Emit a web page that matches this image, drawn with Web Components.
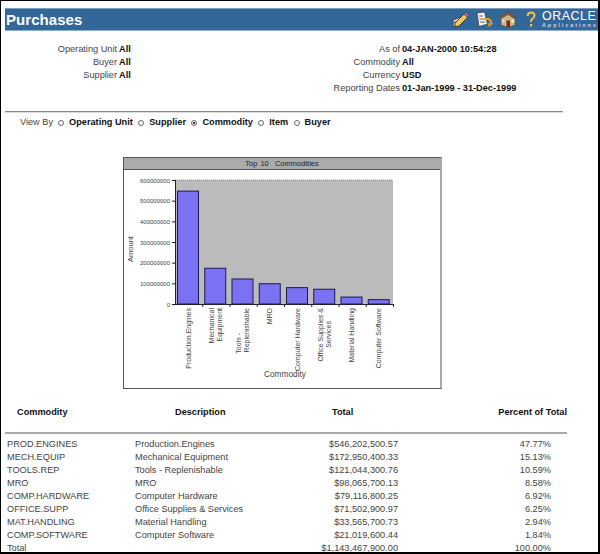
<!DOCTYPE html>
<html>
<head>
<meta charset="utf-8">
<title>Purchases</title>
<style>
  html, body { margin: 0; background: #fff; }
  body { font: 9.2px "Liberation Sans", Arial, sans-serif; color: #444; }
</style>
</head>
<body>
<report-page>
  <app-header heading="Purchases" slot="header"></app-header>
  <param-block>
    <param-col>
      <param-row label="Operating Unit">All</param-row>
      <param-row label="Buyer">All</param-row>
      <param-row label="Supplier">All</param-row>
    </param-col>
    <param-col>
      <param-row label="As of">04-JAN-2000 10:54:28</param-row>
      <param-row label="Commodity">All</param-row>
      <param-row label="Currency">USD</param-row>
      <param-row label="Reporting Dates">01-Jan-1999 - 31-Dec-1999</param-row>
    </param-col>
  </param-block>
  <view-by></view-by>
  <chart-panel heading="Top 10  Commodities"></chart-panel>
  <data-table></data-table>
</report-page>

<script>
function html(str) {
  const t = document.createElement("template");
  t.innerHTML = str;
  return t;
}

const pageTpl = html(`
  <style>
    :host { display: block; box-sizing: border-box; width: 600px; height: 554px; overflow: hidden;
      border: solid #000; border-width: 1px 2px 2px 1px; padding: 7px 0 0 4px; background: #fff; }
  </style>
  <slot name="header"></slot>
  <slot></slot>
`);
class ReportPage extends HTMLElement {
  constructor() {
    super();
    this.attachShadow({ mode: "open" }).appendChild(pageTpl.content.cloneNode(true));
  }
}
customElements.define("report-page", ReportPage);

const headerTpl = html(`
  <style>
    :host { display: flex; align-items: center; justify-content: space-between; height: 21px;
      background: #336699; border-top: 1px solid #7f9fc0; border-bottom: 1px solid #8fb0d0; }
    h1 { margin: 0 0 1px 1px; font: bold 15px "Liberation Sans", Arial, sans-serif; letter-spacing: .05px; color: #fff; }
    .tools { display: flex; align-items: center; }
    svg { display: block; }
    .logo { width: 56px; margin-left: 6px; color: #fff; }
    .logo b { display: block; font: 12.5px/12px "Liberation Sans", Arial, sans-serif; letter-spacing: .5px; white-space: nowrap; }
    .logo i { display: block; font: bold 5.5px/7px "Liberation Sans", Arial, sans-serif; letter-spacing: 1.9px; color: #c8d4e2; white-space: nowrap; }
  </style>
  <h1></h1>
  <div class="tools">
    <!-- pencil on pad -->
    <svg width="18" height="17" viewBox="0 0 18 17" style="margin-right:6px">
      <path d="M1 9 L9 6 L11 12 L4 16 L1 16 Z" fill="#d8d8d0" stroke="#333" stroke-width=".8"/>
      <path d="M1 12 L6 10 M2 15 L8 12" stroke="#555" stroke-width=".9"/>
      <path d="M3 12 L12 3 L15.500 6.500 L7 15 L3 16 Z" fill="#ecc75a" stroke="#2a2a2a" stroke-width=".8"/>
      <path d="M12 3 L14 1 L17 4 L15.500 6.500 Z" fill="#a86aa8" stroke="#333" stroke-width=".4"/>
    </svg>
    <!-- page with arrow -->
    <svg width="18" height="17" viewBox="0 0 18 17" style="margin-right:6px">
      <path d="M1 2 L8.500 1 L11.500 13 L3 15.500 Z" fill="#f4f4f4" stroke="#333" stroke-width=".7"/>
      <path d="M3 5 h4 M3.500 8 h4 M4 11 h5" stroke="#7a5a5a"/>
      <path d="M8 8 L12 8 Q15.500 9 15 13" fill="none" stroke="#e0a020" stroke-width="2.200"/>
      <path d="M11.500 12 L17.500 12 L13 16.500 Z" fill="#d89018"/>
    </svg>
    <!-- house -->
    <svg width="16" height="17" viewBox="0 0 16 17" style="margin-right:10px">
      <path d="M1 7 L8 3 L15 7 L15 14 L8 16.500 L1 14 Z" fill="#c8b888" stroke="#4a4a38" stroke-width=".6"/>
      <path d="M8 .5 L15.500 6.500 L14 7.500 L8 3.500 L2 7 L.5 6 Z" fill="#8a5c3c" stroke="#4a3020" stroke-width=".4"/>
      <rect x="6.500" y="9.500" width="3.500" height="6.500" fill="#8c2018"/>
      <rect x="11.500" y="8.500" width="2.500" height="3" fill="#f2ecc8"/>
      <rect x="2.500" y="8.500" width="2" height="3" fill="#e8e0b8"/>
    </svg>
    <!-- help -->
    <svg width="10" height="17" viewBox="0 0 10 17">
      <path d="M1.500 5 Q2 1.500 5 1.500 Q8.500 1.500 8.500 4.500 Q8.500 6.500 6 8 Q5 9 5 11" fill="none" stroke="#f0c040" stroke-width="2"/>
      <rect x="4" y="13" width="2.200" height="2.500" fill="#f0c040"/>
    </svg>
    <div class="logo"><b>ORACLE</b><i>Applications</i></div>
  </div>
`);
class AppHeader extends HTMLElement {
  constructor() {
    super();
    this.attachShadow({ mode: "open" }).appendChild(headerTpl.content.cloneNode(true));
    this.shadowRoot.querySelector("h1").textContent = this.getAttribute("heading");
  }
}
customElements.define("app-header", AppHeader);

const blockTpl = html(`
  <style>
    :host { display: grid; grid-template-columns: 283px 1fr; height: 69px; margin-top: 12px; box-sizing: border-box;
      width: 558px; border-bottom: 1px solid #888; box-shadow: 0 1px 0 #ddd; }
  </style>
  <slot></slot>
`);
class ParamBlock extends HTMLElement {
  constructor() {
    super();
    this.attachShadow({ mode: "open" }).appendChild(blockTpl.content.cloneNode(true));
  }
}
customElements.define("param-block", ParamBlock);

const colTpl = html(`
  <style>:host { display: block; }</style>
  <slot></slot>
`);
class ParamCol extends HTMLElement {
  constructor() {
    super();
    this.attachShadow({ mode: "open" }).appendChild(colTpl.content.cloneNode(true));
  }
}
customElements.define("param-col", ParamCol);

const rowTpl = html(`
  <style>
    :host { display: flex; gap: 2px; height: 13px; line-height: 13px; }
    .label { width: 112px; text-align: right; white-space: nowrap; }
    .value { font-weight: bold; color: #111; white-space: nowrap; }
  </style>
  <span class="label"></span><span class="value"><slot></slot></span>
`);
class ParamRow extends HTMLElement {
  constructor() {
    super();
    this.attachShadow({ mode: "open" }).appendChild(rowTpl.content.cloneNode(true));
    this.shadowRoot.querySelector(".label").textContent = this.getAttribute("label");
  }
}
customElements.define("param-row", ParamRow);

const viewTpl = html(`
  <style>
    :host { display: flex; align-items: center; height: 13px; line-height: 13px; margin: 4px 0 0 15px; }
    .lbl { margin-right: 5px; }
    .opt { display: flex; align-items: center; font-weight: bold; color: #111; margin-right: 5.4px; }
    .opt i { box-sizing: border-box; width: 6px; height: 6px; border: 1px solid #666; border-radius: 50%; margin-right: 5px; display: block; background: #fff; }
    .opt.on i { background: radial-gradient(circle, #333 0 1px, #fff 1.3px); }
  </style>
  <span class="lbl">View By</span>
  <span class="opt"><i></i>Operating Unit</span>
  <span class="opt"><i></i>Supplier</span>
  <span class="opt on"><i></i>Commodity</span>
  <span class="opt"><i></i>Item</span>
  <span class="opt"><i></i>Buyer</span>
`);
class ViewBy extends HTMLElement {
  constructor() {
    super();
    this.attachShadow({ mode: "open" }).appendChild(viewTpl.content.cloneNode(true));
  }
}
customElements.define("view-by", ViewBy);

// value in millions, then each label line with the y where it ends (top of the rotated text)
const bars = [
  [546.2, [["Production.Engines", 138]]],
  [172.95, [["Mechanical", 138], ["Equipment", 138]]],
  [121.04, [["Tools -", 163], ["Replenishable", 138]]],
  [98.07, [["MRO", 138]]],
  [79.12, [["Computer Hardware", 138]]],
  [71.5, [["Office Supplies &", 138], ["Services", 151]]],
  [33.57, [["Material Handling", 138]]],
  [21.02, [["Computer Software", 138]]],
];

function chartSvg() {
  const left = 51, top = 10, w = 218, h = 124, step = 27.25;
  let s = `<rect x="${left}" y="${top}" width="${w}" height="${h}" fill="#bbb"/>`;
  s += `<path d="M${left} ${top}h${w}" stroke="#888" stroke-dasharray="1 1"/>`;
  for (let i = 0; i <= 6; i++) {
    const y = top + h - (i * h) / 6;
    s += `<path d="M${left - 3} ${y + .5}h3" stroke="#222"/>`;
    s += `<text x="${left - 5}" y="${y + 2.5}" text-anchor="end" font-size="6">${i ? i * 100000000 : 0}</text>`;
  }
  s += `<path d="M${left + .5} ${top}v${h}M${left} ${top + h + .5}h${w}" stroke="#222"/>`;
  bars.forEach(([v, lines], i) => {
    const bh = (v / 600) * h;
    const x = left + 2.5 + i * step;
    s += `<rect x="${x}" y="${top + h - bh}" width="21" height="${bh}" fill="#7a72f2" stroke="#1a1a50"/>`;
    s += `<path d="M${left + (i + 1) * step + .5} ${top + h}v3" stroke="#222"/>`;
    const cx = x + 10.5;
    lines.forEach(([line, end], j) => {
      const off = cx + 2.5 + (j - (lines.length - 1) / 2) * 8;
      s += `<text transform="translate(${off} ${end}) rotate(-90)" text-anchor="end" font-size="7">${line.replace("&", "&amp;")}</text>`;
    });
  });
  s += `<text transform="translate(9 79) rotate(-90)" text-anchor="middle" font-size="7.5">Amount</text>`;
  s += `<text x="161" y="207" text-anchor="middle" font-size="8.3">Commodity</text>`;
  return s;
}

const chartTpl = html(`
  <style>
    :host { display: block; box-sizing: border-box; width: 319px; height: 232px; margin: 28px 0 0 118px;
      border: 1px solid #555; border-right: 2px solid #aaa; background: #fff; }
    .bar { height: 11px; line-height: 11px; text-align: center; font-size: 7.5px; color: #222; background: #ababab;
      border-bottom: 1px solid #555; word-spacing: 1px; white-space: pre; }
    svg { display: block; font-family: "Liberation Sans", Arial, sans-serif; }
    text { fill: #444; }
  </style>
  <div class="bar"></div>
  <svg width="316" height="218"></svg>
`);
class ChartPanel extends HTMLElement {
  constructor() {
    super();
    this.attachShadow({ mode: "open" }).appendChild(chartTpl.content.cloneNode(true));
    this.shadowRoot.querySelector(".bar").textContent = this.getAttribute("heading");
    this.shadowRoot.querySelector("svg").innerHTML = chartSvg();
  }
}
customElements.define("chart-panel", ChartPanel);

const rows = [
  ["PROD.ENGINES", "Production.Engines", "$546,202,500.57", "47.77%"],
  ["MECH.EQUIP", "Mechanical Equipment", "$172,950,400.33", "15.13%"],
  ["TOOLS.REP", "Tools - Replenishable", "$121,044,300.76", "10.59%"],
  ["MRO", "MRO", "$98,065,700.13", "8.58%"],
  ["COMP.HARDWARE", "Computer Hardware", "$79,116,800.25", "6.92%"],
  ["OFFICE.SUPP", "Office Supplies & Services", "$71,502,900.97", "6.25%"],
  ["MAT.HANDLING", "Material Handling", "$33,565,700.73", "2.94%"],
  ["COMP.SOFTWARE", "Computer Software", "$21,019,600.44", "1.84%"],
  ["Total", "", "$1,143,467,900.00", "100.00%"],
];

const tableTpl = html(`
  <style>
    :host { display: block; width: 562px; margin-top: 17px; }
    .grid { display: grid; grid-template-columns: 130px 150px 113px 169px; }
    .head { font-weight: bold; color: #111; height: 28px; line-height: 13px; border-bottom: 2px solid #aaa; box-sizing: border-box; margin-bottom: 4px; }
    .head span:nth-child(1) { padding-left: 12px; }
    .head span:nth-child(2) { padding-left: 40px; }
    .head span:nth-child(3) { padding-left: 47px; }
    .head span:nth-child(4) { text-align: right; }
    .row { height: 13px; line-height: 13px; white-space: nowrap; }
    .row span:nth-child(1) { padding-left: 2px; }
    .row span:nth-child(3) { text-align: right; }
    .row span:nth-child(4) { text-align: right; padding-right: 16px; }
  </style>
  <div class="grid head"><span>Commodity</span><span>Description</span><span>Total</span><span>Percent of Total</span></div>
`);
class DataTable extends HTMLElement {
  constructor() {
    super();
    this.attachShadow({ mode: "open" }).appendChild(tableTpl.content.cloneNode(true));
    for (const r of rows) {
      const d = document.createElement("div");
      d.className = "grid row";
      for (const c of r) {
        const s = document.createElement("span");
        s.textContent = c;
        d.appendChild(s);
      }
      this.shadowRoot.appendChild(d);
    }
  }
}
customElements.define("data-table", DataTable);
</script>
</body>
</html>
